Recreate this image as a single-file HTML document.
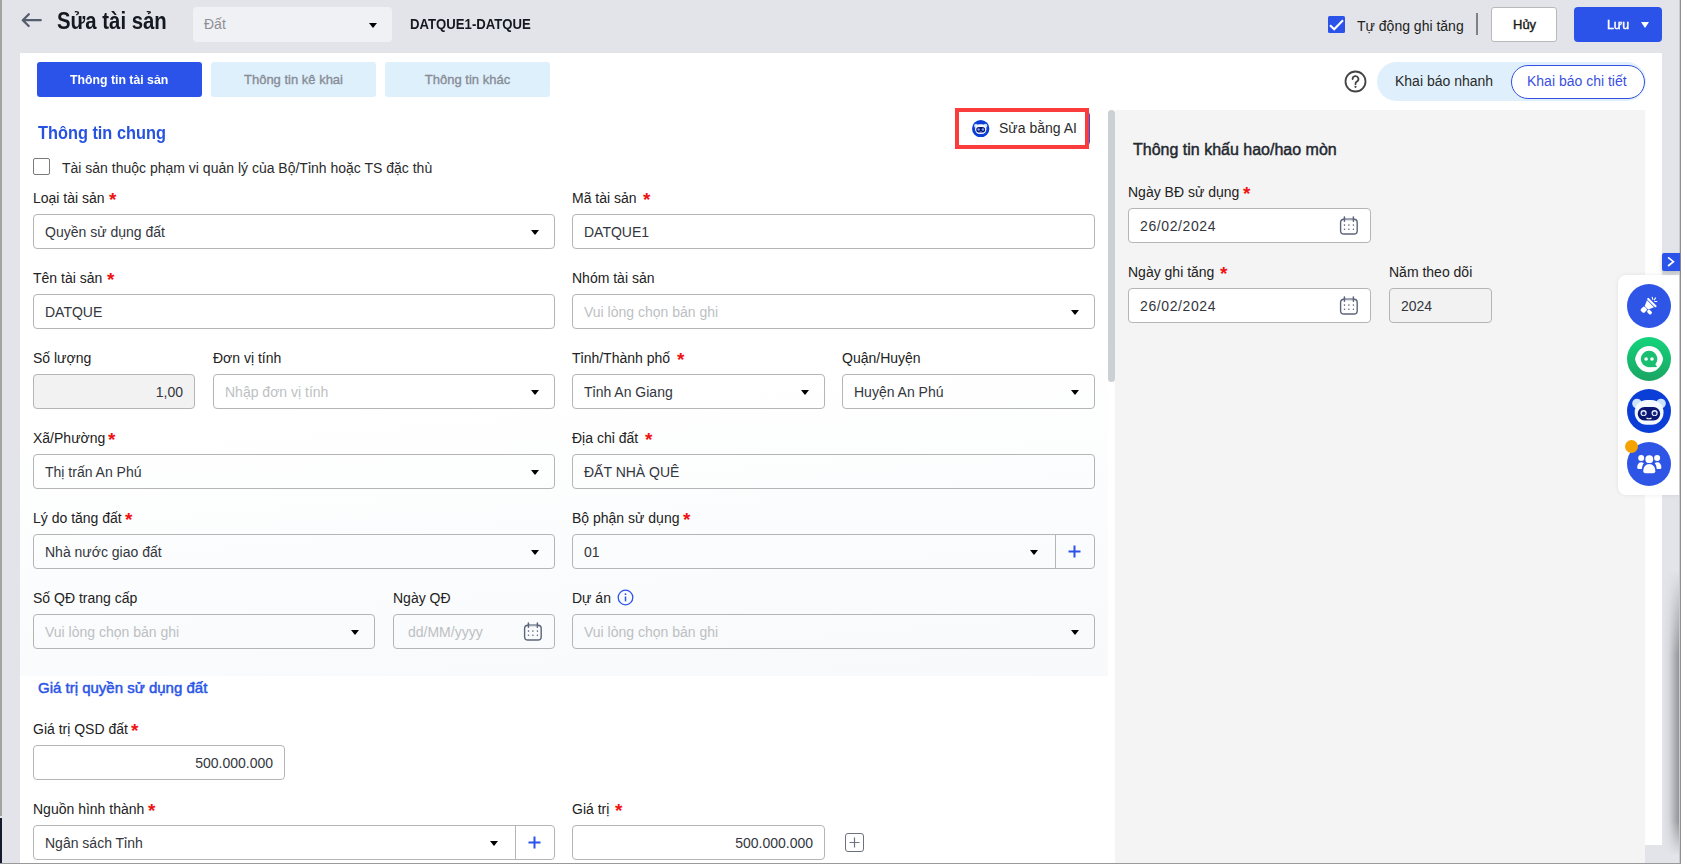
<!DOCTYPE html>
<html><head><meta charset="utf-8">
<style>
*{box-sizing:border-box;margin:0;padding:0}
html,body{width:1681px;height:864px;overflow:hidden}
body{position:relative;background:#e3e4e9;font-family:"Liberation Sans",sans-serif;font-size:14px;color:#1c1c1c}
.a{position:absolute}
.t{position:absolute;white-space:nowrap;transform-origin:0 0}
.lbl{position:absolute;font-size:14px;color:#222;line-height:16px;white-space:nowrap}
.req{position:absolute;color:#f01414;font-size:19px;font-weight:bold;line-height:16px;top:2px}
.inp{position:absolute;height:35px;border:1px solid #b5b5b5;border-radius:4px;background:transparent}
.wh{background:#fff}
.inp .v{position:absolute;left:11px;top:9px;font-size:14px;line-height:16px;color:#33363d;white-space:nowrap}
.inp .ph{color:#bdbfc3}
.caret{position:absolute;width:0;height:0;border-left:4.5px solid transparent;border-right:4.5px solid transparent;border-top:5.5px solid #000;top:15px}
.dis{background:#f2f2f2}
</style></head><body>
<svg class="a" style="left:21px;top:11px" width="22" height="18" viewBox="0 0 22 18"><path d="M19.7 9.2H2M7.8 3.3L1.8 9.2L7.7 15" fill="none" stroke="#555d6e" stroke-width="2.3" stroke-linecap="round" stroke-linejoin="round"/></svg>
<div class="t" style="left:57px;top:7px;font-size:23px;font-weight:bold;color:#141820;line-height:28px;transform:scaleX(0.885);">Sửa tài sản</div>
<div class="a" style="left:193px;top:7px;width:199px;height:35px;background:#f0f1f4;border-radius:4px"><div class="a" style="left:11px;top:9px;color:#8d8f94;font-size:14px;line-height:16px">Đất</div><div class="caret" style="left:176px;top:16px"></div></div>
<div class="t" style="left:410px;top:16px;font-size:14px;font-weight:bold;color:#141820;line-height:16px;transform:scaleX(0.94);">DATQUE1-DATQUE</div>
<div class="a" style="left:1328px;top:16px;width:17px;height:17px;background:#2b53ea;border-radius:1.5px"><svg width="17" height="17" viewBox="0 0 17 17"><path d="M2 9.2L6.2 13.3L15 4.3" fill="none" stroke="#fff" stroke-width="2.1"/></svg></div>
<div class="t" style="left:1357px;top:18px;font-size:14px;font-weight:normal;color:#222;line-height:16px;">Tự động ghi tăng</div>
<div class="a" style="left:1476px;top:13px;width:2px;height:22px;background:#808080"></div>
<div class="a" style="left:1491px;top:7px;width:66px;height:35px;background:#fff;border:1px solid #b9b9b9;border-radius:3px"></div>
<div class="t" style="left:1513px;top:17px;font-size:13px;font-weight:normal;color:#1a1a1a;line-height:16px;-webkit-text-stroke:0.4px #1a1a1a;">Hủy</div>
<div class="a" style="left:1574px;top:7px;width:88px;height:35px;background:#2b53ea;border-radius:4px"></div>
<div class="t" style="left:1607px;top:17px;font-size:13px;font-weight:normal;color:#fff;line-height:16px;transform:scaleX(0.95);-webkit-text-stroke:0.45px #fff;">Lưu</div>
<div class="caret" style="left:1641px;top:22px;border-top-color:#fff;border-top-width:6px"></div>
<div class="a" style="left:20px;top:53px;width:1642px;height:792px;background:#fff"></div>
<div class="a" style="left:20px;top:53px;width:1625px;height:810px;background:#fff"></div>
<div class="a" style="left:37px;top:62px;width:165px;height:35px;background:#2b53ea;border-radius:3px"></div>
<div class="t" style="left:70px;top:72px;font-size:13px;font-weight:bold;color:#fff;line-height:16px;transform:scaleX(0.945);">Thông tin tài sản</div>
<div class="a" style="left:211px;top:62px;width:165px;height:35px;background:#dff0fd;border-radius:3px;color:#878c95;font-size:13px;text-align:center;line-height:35px;-webkit-text-stroke:0.35px #878c95">Thông tin kê khai</div>
<div class="a" style="left:385px;top:62px;width:165px;height:35px;background:#dff0fd;border-radius:3px;color:#878c95;font-size:13px;text-align:center;line-height:35px;-webkit-text-stroke:0.35px #878c95">Thông tin khác</div>
<svg class="a" style="left:1343.5px;top:70px" width="23" height="23" viewBox="0 0 23 23"><circle cx="11.5" cy="11.5" r="10" fill="none" stroke="#444" stroke-width="1.8"/><path d="M8.6 9a2.9 2.9 0 1 1 4.2 2.6c-.9.5-1.3 1-1.3 2v.6" fill="none" stroke="#444" stroke-width="1.8" stroke-linecap="round"/><circle cx="11.5" cy="16.8" r="1.1" fill="#444"/></svg>
<div class="a" style="left:1377px;top:62px;width:269px;height:39px;background:#dff0fc;border-radius:20px"></div>
<div class="t" style="left:1395px;top:73px;font-size:14px;font-weight:normal;color:#2a2a2a;line-height:16px;">Khai báo nhanh</div>
<div class="a" style="left:1511px;top:65px;width:134px;height:34px;background:#fff;border:1.5px solid #3450e0;border-radius:17px"></div>
<div class="t" style="left:1527px;top:73px;font-size:14px;font-weight:normal;color:#3a4fe0;line-height:16px;">Khai báo chi tiết</div>
<div class="a" style="left:20px;top:105px;width:1088px;height:571px;background:linear-gradient(175deg,#ffffff 0%,#ffffff 50%,#f7f9fb 100%)"></div>
<div class="t" style="left:38px;top:122px;font-size:18px;font-weight:bold;color:#2753e0;line-height:22px;transform:scaleX(0.907);">Thông tin chung</div>
<div class="a" style="left:33px;top:158px;width:17px;height:17px;border:1px solid #7a7a7a;border-radius:2px;background:#fff"></div>
<div class="t" style="left:62px;top:160px;font-size:14px;font-weight:normal;color:#2b2b2b;line-height:16px;">Tài sản thuộc phạm vi quản lý của Bộ/Tỉnh hoặc TS đặc thù</div>
<div class="a" style="left:958px;top:111px;width:132px;height:35px;border:1px solid #2b53ea;border-radius:4px;background:#fff"></div>
<div class="a" style="left:955px;top:108px;width:134px;height:41px;border:4px solid #fa3c3c;background:#fff"></div>
<svg class="a" style="left:972.2px;top:120px" width="17.4" height="17.4" viewBox="0 0 44 44"><circle cx="22" cy="22" r="22" fill="#0a3ed6"/><circle cx="10" cy="14.5" r="4.8" fill="#cfe2ff"/><circle cx="34" cy="14.5" r="4.8" fill="#cfe2ff"/><rect x="7.7" y="11" width="28.8" height="24.7" rx="12" fill="#f4f8ff"/><rect x="10.7" y="17.9" width="22.5" height="13.7" rx="6.8" fill="#0a1670"/><circle cx="16.6" cy="24" r="3.1" fill="#7f9cff"/><circle cx="27.6" cy="24" r="3.1" fill="#7f9cff"/><path d="M19.5 29Q22 30.6 24.5 29" stroke="#fff" stroke-width="1.1" fill="none"/></svg>
<div class="t" style="left:999px;top:120px;font-size:14px;font-weight:normal;color:#2b2b2b;line-height:16px;">Sửa bằng AI</div>
<div class="lbl" style="left:33px;top:190px">Loại tài sản<span class="req" style="left:76px">*</span></div>
<div class="inp" style="left:33px;top:214px;width:522px;height:35px"><div class="v">Quyền sử dụng đất</div><div class="caret" style="right:15px"></div></div>
<div class="lbl" style="left:572px;top:190px">Mã tài sản<span class="req" style="left:71px">*</span></div>
<div class="inp" style="left:572px;top:214px;width:523px;height:35px"><div class="v">DATQUE1</div></div>
<div class="lbl" style="left:33px;top:270px">Tên tài sản<span class="req" style="left:74px">*</span></div>
<div class="inp" style="left:33px;top:294px;width:522px;height:35px"><div class="v">DATQUE</div></div>
<div class="lbl" style="left:572px;top:270px">Nhóm tài sản</div>
<div class="inp" style="left:572px;top:294px;width:523px;height:35px"><div class="v ph">Vui lòng chọn bản ghi</div><div class="caret" style="right:15px"></div></div>
<div class="lbl" style="left:33px;top:350px">Số lượng</div>
<div class="inp dis" style="left:33px;top:374px;width:162px;height:35px"><div class="v" style="left:auto;right:11px">1,00</div></div>
<div class="lbl" style="left:213px;top:350px">Đơn vị tính</div>
<div class="inp" style="left:213px;top:374px;width:342px;height:35px"><div class="v ph">Nhập đơn vị tính</div><div class="caret" style="right:15px"></div></div>
<div class="lbl" style="left:572px;top:350px">Tỉnh/Thành phố<span class="req" style="left:105px">*</span></div>
<div class="inp" style="left:572px;top:374px;width:253px;height:35px"><div class="v">Tỉnh An Giang</div><div class="caret" style="right:15px"></div></div>
<div class="lbl" style="left:842px;top:350px">Quận/Huyện</div>
<div class="inp" style="left:842px;top:374px;width:253px;height:35px"><div class="v">Huyện An Phú</div><div class="caret" style="right:15px"></div></div>
<div class="lbl" style="left:33px;top:430px">Xã/Phường<span class="req" style="left:75px">*</span></div>
<div class="inp" style="left:33px;top:454px;width:522px;height:35px"><div class="v">Thị trấn An Phú</div><div class="caret" style="right:15px"></div></div>
<div class="lbl" style="left:572px;top:430px">Địa chỉ đất<span class="req" style="left:73px">*</span></div>
<div class="inp" style="left:572px;top:454px;width:523px;height:35px"><div class="v">ĐẤT NHÀ QUÊ</div></div>
<div class="lbl" style="left:33px;top:510px">Lý do tăng đất<span class="req" style="left:92px">*</span></div>
<div class="inp" style="left:33px;top:534px;width:522px;height:35px"><div class="v">Nhà nước giao đất</div><div class="caret" style="right:15px"></div></div>
<div class="lbl" style="left:572px;top:510px">Bộ phận sử dụng<span class="req" style="left:111px">*</span></div>
<div class="inp" style="left:572px;top:534px;width:523px;height:35px"><div class="v">01</div><div class="a" style="right:38px;top:0;width:1px;height:33px;background:#b5b5b5"></div><div class="caret" style="right:56px"></div><svg class="a" style="right:13px;top:10px" width="13" height="13" viewBox="0 0 13 13"><path d="M6.5 0.5V12.5M0.5 6.5H12.5" stroke="#2b53ea" stroke-width="2"/></svg></div>
<div class="lbl" style="left:33px;top:590px">Số QĐ trang cấp</div>
<div class="inp" style="left:33px;top:614px;width:342px;height:35px"><div class="v ph">Vui lòng chọn bản ghi</div><div class="caret" style="right:15px"></div></div>
<div class="lbl" style="left:393px;top:590px">Ngày QĐ</div>
<div class="inp" style="left:393px;top:614px;width:162px;height:35px"><div class="v ph" style="left:14px">dd/MM/yyyy</div><svg class="a" style="right:12px;top:7px" width="20" height="20" viewBox="0 0 20 20"><rect x="2.6" y="3.2" width="16.6" height="14.8" rx="3.3" fill="none" stroke="#5b6579" stroke-width="1.4"/><path d="M6.4 3.3H15.4" stroke="#9aa2b2" stroke-width="2"/><path d="M6.4 0.9V5.3M15.4 0.9V5.3" stroke="#5b6579" stroke-width="1.5" stroke-linecap="round"/><g fill="#5b6579"><circle cx="6.5" cy="9.1" r=".8"/><circle cx="10.9" cy="9.1" r=".8"/><circle cx="15.4" cy="9.1" r=".8"/><circle cx="6.5" cy="13.3" r=".8"/><circle cx="10.9" cy="13.3" r=".8"/><circle cx="15.4" cy="13.3" r=".8"/></g></svg></div>
<div class="lbl" style="left:572px;top:590px">Dự án</div>
<div class="inp" style="left:572px;top:614px;width:523px;height:35px"><div class="v ph">Vui lòng chọn bản ghi</div><div class="caret" style="right:15px"></div></div>
<svg class="a" style="left:617px;top:589px" width="17" height="17" viewBox="0 0 17 17"><circle cx="8.5" cy="8.5" r="7.3" fill="none" stroke="#2b53ea" stroke-width="1.3"/><path d="M8.5 7.5V12.3" stroke="#2b53ea" stroke-width="1.5"/><circle cx="8.5" cy="5.2" r=".9" fill="#2b53ea"/></svg>
<div class="t" style="left:38px;top:679px;font-size:15px;font-weight:normal;color:#2b55e6;line-height:18px;-webkit-text-stroke:0.5px #2b55e6;">Giá trị quyền sử dụng đất</div>
<div class="lbl" style="left:33px;top:721px">Giá trị QSD đất<span class="req" style="left:98px">*</span></div>
<div class="inp" style="left:33px;top:745px;width:252px;height:35px"><div class="v" style="left:auto;right:11px">500.000.000</div></div>
<div class="lbl" style="left:33px;top:801px">Nguồn hình thành<span class="req" style="left:115px">*</span></div>
<div class="inp" style="left:33px;top:825px;width:522px;height:35px"><div class="v">Ngân sách Tỉnh</div><div class="a" style="right:38px;top:0;width:1px;height:33px;background:#b5b5b5"></div><div class="caret" style="right:56px"></div><svg class="a" style="right:13px;top:10px" width="13" height="13" viewBox="0 0 13 13"><path d="M6.5 0.5V12.5M0.5 6.5H12.5" stroke="#2b53ea" stroke-width="2"/></svg></div>
<div class="lbl" style="left:572px;top:801px">Giá trị<span class="req" style="left:43px">*</span></div>
<div class="inp" style="left:572px;top:825px;width:253px;height:35px"><div class="v" style="left:auto;right:11px">500.000.000</div></div>
<div class="a" style="left:845px;top:833px;width:19px;height:19px;border:1px solid #6d7280;border-radius:3px"><svg class="a" style="left:3px;top:3px" width="11" height="11" viewBox="0 0 11 11"><path d="M5.5 0.5V10.5M0.5 5.5H10.5" stroke="#6d7280" stroke-width="1.2"/></svg></div>
<div class="a" style="left:1108px;top:110px;width:7px;height:272px;background:#cbd0d5;border-radius:4px"></div>
<div class="a" style="left:1115px;top:110px;width:530px;height:753px;background:#f4f4f4"></div>
<div class="t" style="left:1133px;top:140px;font-size:16px;font-weight:normal;color:#23272e;line-height:20px;-webkit-text-stroke:0.45px #23272e;">Thông tin khấu hao/hao mòn</div>
<div class="lbl" style="left:1128px;top:184px">Ngày BĐ sử dụng<span class="req" style="left:115px">*</span></div>
<div class="inp wh" style="left:1128px;top:208px;width:243px;height:35px"><div class="v"><span style="letter-spacing:.6px">26/02/2024</span></div><svg class="a" style="right:12px;top:7px" width="20" height="20" viewBox="0 0 20 20"><rect x="2.6" y="3.2" width="16.6" height="14.8" rx="3.3" fill="none" stroke="#5b6579" stroke-width="1.4"/><path d="M6.4 3.3H15.4" stroke="#9aa2b2" stroke-width="2"/><path d="M6.4 0.9V5.3M15.4 0.9V5.3" stroke="#5b6579" stroke-width="1.5" stroke-linecap="round"/><g fill="#5b6579"><circle cx="6.5" cy="9.1" r=".8"/><circle cx="10.9" cy="9.1" r=".8"/><circle cx="15.4" cy="9.1" r=".8"/><circle cx="6.5" cy="13.3" r=".8"/><circle cx="10.9" cy="13.3" r=".8"/><circle cx="15.4" cy="13.3" r=".8"/></g></svg></div>
<div class="lbl" style="left:1128px;top:264px">Ngày ghi tăng<span class="req" style="left:92px">*</span></div>
<div class="inp wh" style="left:1128px;top:288px;width:243px;height:35px"><div class="v"><span style="letter-spacing:.6px">26/02/2024</span></div><svg class="a" style="right:12px;top:7px" width="20" height="20" viewBox="0 0 20 20"><rect x="2.6" y="3.2" width="16.6" height="14.8" rx="3.3" fill="none" stroke="#5b6579" stroke-width="1.4"/><path d="M6.4 3.3H15.4" stroke="#9aa2b2" stroke-width="2"/><path d="M6.4 0.9V5.3M15.4 0.9V5.3" stroke="#5b6579" stroke-width="1.5" stroke-linecap="round"/><g fill="#5b6579"><circle cx="6.5" cy="9.1" r=".8"/><circle cx="10.9" cy="9.1" r=".8"/><circle cx="15.4" cy="9.1" r=".8"/><circle cx="6.5" cy="13.3" r=".8"/><circle cx="10.9" cy="13.3" r=".8"/><circle cx="15.4" cy="13.3" r=".8"/></g></svg></div>
<div class="lbl" style="left:1389px;top:264px">Năm theo dõi</div>
<div class="inp dis" style="left:1389px;top:288px;width:103px;height:35px"><div class="v">2024</div></div>
<div class="a" style="left:1663px;top:570px;width:17px;height:285px;background:linear-gradient(90deg,rgba(0,0,0,0) 0%,rgba(0,0,0,.06) 35%,rgba(0,0,0,.38) 100%);-webkit-mask-image:linear-gradient(180deg,transparent 0%,#000 30%,#000 88%,transparent 100%)"></div>
<div class="a" style="left:1618px;top:275px;width:63px;height:220px;background:#fff;border-radius:8px 0 0 8px;box-shadow:0 0 4px rgba(0,0,0,.08)"></div>
<svg class="a" style="left:1627px;top:284px" width="44" height="44" viewBox="0 0 44 44"><circle cx="22" cy="22" r="22" fill="#2f55e6"/>
<g transform="rotate(-45 22 22)" fill="#fff"><rect x="3.4" y="-6.6" width="2.1" height="12.4" rx="1" transform="translate(22 22)"/><path d="M24.6 16.6L24.6 26.4L18.9 24L18.9 19Z"/><rect x="12.9" y="18.4" width="5.6" height="5.1" rx="1.4"/><rect x="16.4" y="24.2" width="3.4" height="5" rx="1.3"/></g>
<path d="M25.2 13.2L25.7 15.3M28.6 13.9L27.2 15.9M29.8 17.5L27.8 17.5" stroke="#fff" stroke-width="1.1" stroke-linecap="round"/></svg>
<svg class="a" style="left:1627px;top:337px" width="44" height="44" viewBox="0 0 44 44"><defs><linearGradient id="gg" x1="0" y1="0" x2="0" y2="1"><stop offset="0" stop-color="#14d47c"/><stop offset="1" stop-color="#1aa562"/></linearGradient></defs><circle cx="22" cy="22" r="22" fill="url(#gg)"/>
<path d="M8 22C9.5 14 15 8.9 22 8.9C29 8.9 34.5 14 36.2 22C34.5 30 29 35.2 22 35.2C15 35.2 9.5 30 8 22Z" fill="#fff"/><path d="M22 13.8A8.2 8.2 0 1 0 22 30.2L30.2 30L28.3 27.3A8.2 8.2 0 0 0 22 13.8Z" fill="#18bf70"/><circle cx="19.1" cy="22" r="1.8" fill="#fff"/><circle cx="25" cy="22" r="1.8" fill="#fff"/></svg>
<svg class="a" style="left:1627px;top:389px" width="44" height="44" viewBox="0 0 44 44"><circle cx="22" cy="22" r="22" fill="#0a3ed6"/><circle cx="10" cy="14.5" r="4.8" fill="#cfe2ff"/><circle cx="34" cy="14.5" r="4.8" fill="#cfe2ff"/><rect x="7.7" y="11" width="28.8" height="24.7" rx="12" fill="#f4f8ff"/><rect x="10.7" y="17.9" width="22.5" height="13.7" rx="6.8" fill="#0a1670"/><circle cx="16.6" cy="24" r="3.1" fill="#e8ecff"/><circle cx="27.6" cy="24" r="3.1" fill="#e8ecff"/><circle cx="16.6" cy="24.4" r="1.8" fill="#1a2a80"/><circle cx="27.6" cy="24.4" r="1.8" fill="#1a2a80"/><path d="M19.5 29Q22 30.6 24.5 29" stroke="#fff" stroke-width="1.1" fill="none"/></svg>
<svg class="a" style="left:1627px;top:442px" width="44" height="44" viewBox="0 0 44 44"><circle cx="22" cy="22" r="22" fill="#2f55e6"/><g fill="#fff"><circle cx="22.3" cy="17.2" r="3.9"/><circle cx="14.2" cy="16" r="3"/><circle cx="30.1" cy="16" r="3"/><path d="M16.3 29.3C16.3 25 18.7 22 22.3 22C25.9 22 28.3 25 28.3 29.3Q28.3 31.3 26.3 31.3H18.3Q16.3 31.3 16.3 29.3Z"/><path d="M10.2 25.5C10.2 22.2 12 20.2 14.2 20.2C15.3 20.2 16.2 20.6 16.9 21.2C15.7 22.5 15 24.5 14.9 27.1H11.6Q10.2 27.1 10.2 25.5Z"/><path d="M34.4 25.5C34.4 22.2 32.6 20.2 30.4 20.2C29.3 20.2 28.4 20.6 27.7 21.2C28.9 22.5 29.6 24.5 29.7 27.1H33Q34.4 27.1 34.4 25.5Z"/></g></svg>
<div class="a" style="left:1625px;top:440px;width:13px;height:13px;border-radius:50%;background:#f5a300"></div>
<div class="a" style="left:0;top:0;width:2px;height:816px;background:#a3a3a3"></div>
<div class="a" style="left:0;top:818px;width:2px;height:45px;background:#161a2e"></div>
<div class="a" style="left:1679px;top:0;width:1px;height:864px;background:#c9cacd"></div>
<div class="a" style="left:1680px;top:0;width:1px;height:864px;background:#8f8f8f"></div>
<div class="a" style="left:0;top:863px;width:1681px;height:1px;background:#9a9a9a"></div>
<div class="a" style="left:1662px;top:253px;width:18px;height:18px;background:#2b53ea;border-radius:2px 0 0 2px;box-shadow:0 2px 4px rgba(0,0,0,.18)"><svg class="a" style="left:5px;top:4px" width="9" height="10" viewBox="0 0 9 10"><path d="M1.1 0.4L6.4 4.7L1.1 9" fill="none" stroke="#fff" stroke-width="1.7"/></svg></div>
</body></html>
